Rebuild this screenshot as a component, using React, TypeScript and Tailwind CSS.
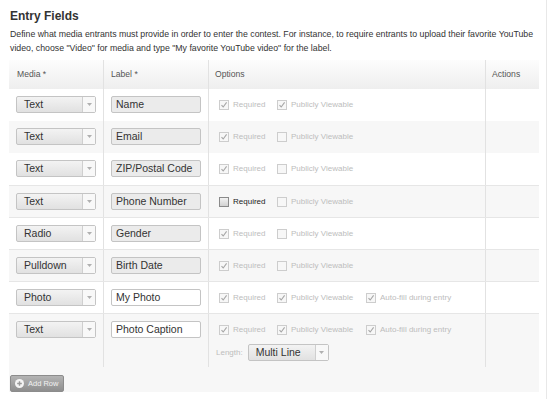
import React from "react";

type Row = {
  media: string;
  label: string;
  white?: boolean;
  req: boolean;
  reqEnabled?: boolean;
  pub: boolean;
  auto?: boolean;
  length?: boolean;
};

const rows: Row[] = [
  { media: "Text", label: "Name", req: true, pub: true },
  { media: "Text", label: "Email", req: true, pub: false },
  { media: "Text", label: "ZIP/Postal Code", req: true, pub: false },
  { media: "Text", label: "Phone Number", req: false, reqEnabled: true, pub: false },
  { media: "Radio", label: "Gender", req: true, pub: false },
  { media: "Pulldown", label: "Birth Date", req: true, pub: false },
  { media: "Photo", label: "My Photo", white: true, req: true, pub: true, auto: true },
  { media: "Text", label: "Photo Caption", white: true, req: true, pub: true, auto: true, length: true },
];

function Check({ checked, enabled }: { checked: boolean; enabled?: boolean }) {
  return (
    <span
      className={`inline-flex h-[10px] w-[10px] shrink-0 items-center justify-center border ${
        enabled
          ? "border-[#8a8a8a] bg-gradient-to-b from-[#f2f2f2] to-[#d2d2d2]"
          : "border-[#cdcdcd] bg-[#f7f7f7]"
      }`}
    >
      {checked && (
        <svg width="8" height="8" viewBox="0 0 8 8">
          <path d="M1.5 4.2 L3.2 6 L6.6 1.4" stroke="#a6a6a6" strokeWidth="1.1" fill="none" />
        </svg>
      )}
    </span>
  );
}

function Opt({ checked, enabled, text, w }: { checked: boolean; enabled?: boolean; text: string; w: string }) {
  return (
    <div className={`flex items-center gap-[4px] ${w}`}>
      <Check checked={checked} enabled={enabled} />
      <span className={`text-[8px] leading-[10px] ${enabled ? "text-[#222]" : "text-[#bdbdbd]"}`}>{text}</span>
    </div>
  );
}

function Select({ value, w }: { value: string; w: string }) {
  return (
    <div className={`flex h-[17px] ${w} rounded-[2px] border border-[#c4c4c4] bg-gradient-to-b from-[#f3f3f3] to-[#e1e1e1]`}>
      <span className="flex-1 pl-[7px] text-[10.5px] leading-[15px] text-[#333]">{value}</span>
      <span className="flex w-[13px] items-center justify-center border-l border-[#cfcfcf] bg-[#f8f8f8]">
        <svg width="5" height="3" viewBox="0 0 5 3">
          <path d="M0 0 H5 L2.5 3 Z" fill="#b0b0b0" />
        </svg>
      </span>
    </div>
  );
}

function Input({ value, white }: { value: string; white?: boolean }) {
  return (
    <div
      className={`h-[17px] w-[90px] rounded-[2px] border border-[#c4c4c4] pl-[4px] text-[10.5px] leading-[15px] text-[#333] ${
        white ? "bg-white" : "bg-[#ebebeb]"
      }`}
    >
      {value}
    </div>
  );
}

export default function App() {
  return (
    <div className="h-[399px] w-[550px] overflow-hidden bg-white font-['Liberation_Sans',Arial,sans-serif]">
      <div className="h-[399px] w-[547px] border-r border-[#e8e8e8]">
        <div className="pl-[10px] pt-[9px] text-[12px] font-bold leading-[14px] text-[#333]">Entry Fields</div>
        <div className="mt-[5px] whitespace-nowrap pl-[10px] text-[8.75px] leading-[13.5px] text-[#333]">
          Define what media entrants must provide in order to enter the contest. For instance, to require entrants to upload their favorite YouTube
          <br />
          video, choose "Video" for media and type "My favorite YouTube video" for the label.
        </div>

        <div className="ml-[9px] mt-[5px] w-[530px]">
          {/* header */}
          <div className="grid h-[29px] grid-cols-[94px_105px_277px_54px] bg-gradient-to-b from-[#fdfdfd] to-[#eeeeee] text-[8.6px] text-[#555]">
            <div className="flex items-center pl-[8px]">Media *</div>
            <div className="flex items-center border-l border-[#e2e2e2] pl-[7px]">Label *</div>
            <div className="flex items-center border-l border-[#e2e2e2] pl-[6px]">Options</div>
            <div className="flex items-center border-l border-[#e2e2e2] pl-[6px]">Actions</div>
          </div>

          {rows.map((r, i) => (
            <div
              key={i}
              className={`grid grid-cols-[94px_105px_277px_54px] ${i >= 3 ? "border-t border-[#e6e6e6]" : ""} ${
                i % 2 === 1 ? "bg-[#f7f7f7]" : "bg-white"
              } ${i >= 3 ? (r.length ? "h-[54px]" : "h-[32px]") : "h-[32px]"}`}
            >
              <div className="pl-[7px] pt-[7px]">
                <Select value={r.media} w="w-[80px]" />
              </div>
              <div className="border-l border-[#e2e2e2] pl-[7px] pt-[7px]">
                <Input value={r.label} white={r.white} />
              </div>
              <div className="border-l border-[#e2e2e2] pt-[7px]">
                <div className="flex h-[17px] items-center pl-[10px]">
                  <Opt checked={r.req} enabled={r.reqEnabled} text="Required" w="w-[58px]" />
                  <Opt checked={r.pub} text="Publicly Viewable" w="w-[89px]" />
                  {r.auto && <Opt checked={true} text="Auto-fill during entry" w="w-[100px]" />}
                </div>
                {r.length && (
                  <div className="mt-[6px] flex items-center gap-[5px] pl-[7px]">
                    <span className="text-[8px] text-[#bdbdbd]">Length:</span>
                    <Select value="Multi Line" w="w-[81px]" />
                  </div>
                )}
              </div>
              <div className="border-l border-[#e2e2e2]" />
            </div>
          ))}

          {/* footer */}
          <div className="h-[25px] bg-[#f7f7f7] pl-[1px] pt-[8px]">
            <div className="flex h-[17px] w-[54px] items-center gap-[4px] rounded-[2px] border border-[#8c8c8c] bg-gradient-to-b from-[#b4b4b4] to-[#8e8e8e] pl-[4px]">
              <svg width="9" height="9" viewBox="0 0 9 9">
                <circle cx="4.5" cy="4.5" r="4.5" fill="#f4f4f4" />
                <path d="M4.5 2.2 V6.8 M2.2 4.5 H6.8" stroke="#999" strokeWidth="1.4" />
              </svg>
              <span className="text-[7.5px] leading-[10px] text-[#f2f2f2]">Add Row</span>
            </div>
          </div>
        </div>
      </div>
    </div>
  );
}
